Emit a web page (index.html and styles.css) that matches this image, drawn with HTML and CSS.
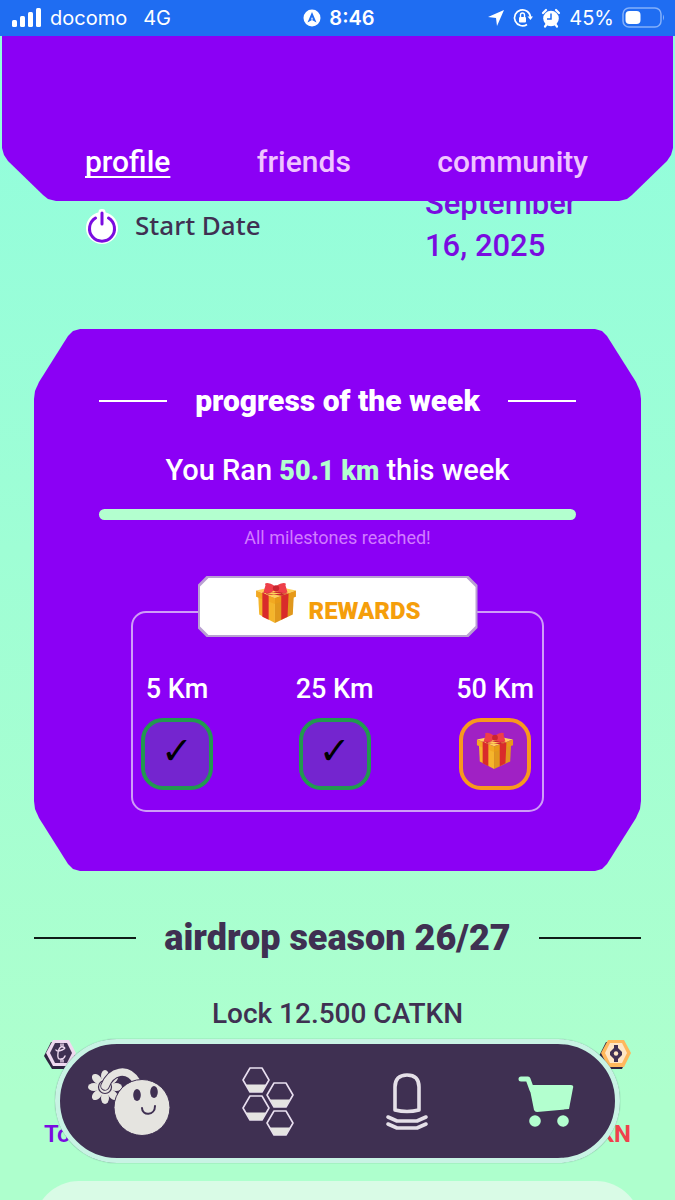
FILE: index.html
```html
<!DOCTYPE html>
<html lang="en">
<head>
<meta charset="utf-8">
<meta name="viewport" content="width=device-width, initial-scale=1">
<title>Profile</title>
<link rel="stylesheet" href="styles.css">
</head>
<body>
<svg class="defs" aria-hidden="true">
  <defs>
    <symbol id="gift" viewBox="0 0 40 40">
      <path fill="#f5b52b" d="M3 12 19 17V39L4 31Z"/>
      <path fill="#e0981c" d="M37 12 19 17V39L36 31Z"/>
      <path fill="#ffd25a" d="M1 8 20 4 39 8 19 15Z"/>
      <path fill="#f2a922" d="M1 8 19 15V21L1 14Z"/>
      <path fill="#e79a18" d="M39 8 19 15V21L39 14Z"/>
      <path fill="#d92b2b" d="M7 10 13 13V36L7 33ZM32 11 25 13V36L31 33Z"/>
      <path fill="#c9252f" d="M7 10 12 9 29 12 25 13ZM31 11 27 8 10 11 12 12Z"/>
      <path fill="#ee3f49" d="M19 4C14 0 8 0 10 3L8 10C13 11 17 10 19 7ZM20 4C25 0 31 0 29 3L31 10C26 11 22 10 20 7Z"/>
      <rect fill="#c9252f" x="17" y="3" width="6" height="6" rx="3"/>
    </symbol>
    <symbol id="cell" viewBox="0 0 28 26">
      <path fill="none" stroke="#e9dff0" stroke-width="1.6" stroke-linejoin="round" d="M8 1H20L27 13 20 25H8L1 13Z"/>
      <path fill="#e5e4e2" d="M4 17.500H24L20 25H8Z"/>
    </symbol>
  </defs>
</svg>

<div class="status">
  <div class="status-side">
    <svg width="30" height="20" viewBox="0 0 30 20" fill="#fff"><rect y="12" width="5" height="7" rx="1.500"/><rect x="8" y="8" width="5" height="11" rx="1.500"/><rect x="16" y="4" width="5" height="15" rx="1.500"/><rect x="24" width="5" height="19" rx="1.500"/></svg>
    <span class="carrier">docomo</span>
    <span>4G</span>
  </div>
  <div class="status-time">
    <svg width="18" height="18" viewBox="0 0 18 18"><circle cx="9" cy="9" r="8.500" fill="#fff"/><path fill="#1f6df2" d="M9 3 13.500 13.500 9 11 4.500 13.500Z"/><path fill="#fff" d="M9 8 10 10.500H8Z"/></svg>
    <span>8:46</span>
  </div>
  <div class="status-side status-end">
    <svg width="18" height="18" viewBox="0 0 18 18"><path fill="#fff" d="M17 1 10 17 9 9 1 8Z"/></svg>
    <svg width="20" height="20" viewBox="0 0 20 20"><path fill="none" stroke="#fff" stroke-width="1.700" d="M14 16.500A8 8 0 1 1 17.500 9"/><path fill="#fff" d="M14.500 8.500H20L17.500 12Z"/><rect x="6" y="9" width="7" height="5.500" rx="1" fill="#fff"/><path fill="none" stroke="#fff" stroke-width="1.400" d="M7.500 9V7a2 2 0 0 1 4 0V9"/></svg>
    <svg width="20" height="20" viewBox="0 0 20 20"><circle cx="10" cy="10.500" r="7.800" fill="#fff"/><path fill="none" stroke="#fff" stroke-width="2.200" stroke-linecap="round" d="M2 5 5 2M18 5 15 2M4 18.500 5.500 16.500M16 18.500 14.500 16.500"/><path fill="none" stroke="#1f6df2" stroke-width="1.500" d="M10 5.500V11H6"/></svg>
    <span>45%</span>
    <svg width="44" height="22" viewBox="0 0 44 22"><rect x="1" y="1" width="38" height="19" rx="6" fill="none" stroke="#84b0fa" stroke-width="1.500"/><rect x="3.500" y="4" width="15" height="13" rx="4" fill="#fff"/><path fill="#84b0fa" d="M41 7.500Q43 10.500 41 13.500Z"/></svg>
  </div>
</div>

<header class="header">
  <nav class="tabs">
    <a class="tab active" href="#profile">profile</a>
    <a class="tab" href="#friends">friends</a>
    <a class="tab" href="#community">community</a>
  </nav>
</header>

<main class="page">
  <section class="start">
    <div class="start-label">
      <svg width="34" height="36" viewBox="0 0 34 36"><circle cx="17" cy="21" r="16" fill="#fff"/><rect x="13.500" y="2" width="7" height="16" rx="3" fill="#fff"/><path fill="none" stroke="#7a0ce0" stroke-width="3" stroke-linecap="round" d="M10.500 11A12.500 12.500 0 1 0 23.500 11M17 6V17"/></svg>
      <span>Start Date</span>
    </div>
    <div class="start-date">September 16, 2025</div>
  </section>

  <section class="card">
    <h2 class="rule-title">progress of the week</h2>
    <p class="ran">You Ran <strong>50.1 km</strong> this week</p>
    <div class="bar"></div>
    <p class="note">All milestones reached!</p>
    <div class="badge"><div class="badge-face">
      <svg width="42" height="42"><use href="#gift"/></svg>
      <span>REWARDS</span>
    </div></div>
    <ul class="goals">
      <li class="goal"><span>5 Km</span><div class="tile">✓</div></li>
      <li class="goal"><span>25 Km</span><div class="tile">✓</div></li>
      <li class="goal"><span>50 Km</span><div class="tile open"><svg width="38" height="38"><use href="#gift"/></svg></div></li>
    </ul>
  </section>

  <section class="airdrop">
    <h2 class="rule-title large">airdrop season 26/27</h2>
    <p class="lock">Lock 12.500 CATKN</p>
    <div class="tokens">
      <div class="token">
        <svg width="32" height="29" viewBox="0 0 32 29"><path fill="#2d2440" d="M7 2H24L31 16 24 29H8L0 16Z"/><path fill="#eed9ef" d="M9 0H25L32 13 25 26H9L2 13Z"/><path fill="#3f3052" d="M11 3H23L28 13 23 23H11L6 13Z"/><path fill="none" stroke="#eed9ef" stroke-width="1.400" stroke-linecap="round" d="M12 10Q13 12 18 10T19 7Q15 6 14 13T17 19Q20 19 21 16M17 4V6M17 20V22M19 4V6M19 20V22"/></svg>
        <span>Total</span>
      </div>
      <div class="token token-end">
        <svg width="32" height="29" viewBox="0 0 32 29"><path fill="#2d2440" d="M7 2H24L29 16 23 29H8L0 16Z"/><path fill="#ffb85c" d="M9 0H25L32 13 25 27H9L2 13Z"/><path fill="#ffe6c4" d="M11 3H23L28 13 23 23H11L6 13Z"/><path fill="#3f3052" d="M15 5H19V8L23 12V15L19 19V22H15V19L11 15V12L15 8Z"/><circle cx="17" cy="13.500" r="2.200" fill="#ffe6c4"/></svg>
        <span>CATKN</span>
      </div>
    </div>
  </section>
  <section class="panel"></section>
</main>

<nav class="dock">
  <a href="#home" aria-label="Home"><svg width="84" height="70" viewBox="-1 -3 84 70">
    <g fill="#e5e4e0"><ellipse cx="17" cy="7" rx="4" ry="6"/><ellipse cx="17" cy="29" rx="4" ry="6"/><ellipse cx="6" cy="18" rx="6" ry="4"/><ellipse cx="28" cy="18" rx="6" ry="4"/><ellipse cx="9" cy="10" rx="4" ry="6" transform="rotate(-45 9 10)"/><ellipse cx="25" cy="10" rx="4" ry="6" transform="rotate(45 25 10)"/><ellipse cx="9" cy="26" rx="4" ry="6" transform="rotate(45 9 26)"/><ellipse cx="25" cy="26" rx="4" ry="6" transform="rotate(-45 25 26)"/><circle cx="17" cy="18" r="9"/></g>
    <circle cx="17" cy="18" r="6.500" fill="none" stroke="#3f3052" stroke-width="1.200"/>
    <path fill="none" stroke="#3f3052" stroke-width="9.500" stroke-linecap="round" d="M17 17C23 2 39-3 49 13"/>
    <path fill="none" stroke="#e5e4e0" stroke-width="7.500" stroke-linecap="round" d="M17 17C23 2 39-3 49 13"/>
    <circle cx="54" cy="38.500" r="28" fill="#e5e4e0" stroke="#3f3052"/>
    <ellipse cx="49" cy="26" rx="3.800" ry="6" fill="#3f3052"/><ellipse cx="66" cy="23" rx="3.800" ry="6" fill="#3f3052"/>
    <path fill="none" stroke="#3f3052" stroke-width="2" stroke-linecap="round" d="M54 39C54 47 67 47 67 37"/>
  </svg></a>
  <a href="#hive" aria-label="Hive"><svg width="52" height="70" viewBox="0 -1 52 70"><use href="#cell" width="28" height="26"/><use href="#cell" x="24" y="15" width="28" height="26"/><use href="#cell" y="28" width="28" height="26"/><use href="#cell" x="24" y="43" width="28" height="26"/></svg></a>
  <a href="#rank" aria-label="Rank"><svg width="42" height="58" viewBox="0 -1 42 58" fill="none" stroke="#e5e0e8" stroke-width="3.600" stroke-linecap="round" stroke-linejoin="round"><path d="M9 37V14Q9 2 21 2T33 14V37Q21 40 9 37Z"/><path d="M2 44 11 48H31L40 44M2 51 11 55H31L40 51"/></svg></a>
  <a href="#shop" aria-label="Shop"><svg width="56" height="52" viewBox="0 -1 56 52" fill="#b3ffcf"><path fill="none" stroke="#b3ffcf" stroke-width="5" stroke-linecap="round" stroke-linejoin="round" d="M3 3H10L14 14"/><path d="M11 9H53Q56 9 55 12L51 33 19 36Q17 36 16 34Z"/><circle cx="17" cy="45" r="5.800"/><circle cx="45" cy="45" r="5.800"/></svg></a>
</nav>
</body>
</html>
```

FILE: styles.css
```css
* { box-sizing: border-box; }

body {
  margin: 0;
  height: 100vh;
  overflow: hidden;
  background: linear-gradient(#90fddd, #aeffcd 1100px);
  font-family: Roboto, "Open Sans", sans-serif;
  font-weight: 500;
  color: #3f3052;
}

h2, p, ul { margin: 0; padding: 0; }
svg { display: block; flex: none; overflow: visible; }
.defs { position: absolute; width: 0; height: 0; }

/* Status bar */
.status {
  position: fixed;
  inset: 0 0 auto;
  z-index: 3;
  height: 36px;
  padding: 0 9px 0 12px;
  display: grid;
  grid-template-columns: 1fr auto 1fr;
  align-items: center;
  background: #1f6df2;
  color: #fff;
  font: 400 20px/36px Inter, sans-serif;
}
.status-side, .status-time { display: flex; align-items: center; gap: 8px; }
.status-time { font-weight: 600; }
.status-end { justify-content: flex-end; }
.carrier { margin-right: 8px; }

/* Header tabs */
.header {
  position: fixed;
  inset: 36px 2px auto;
  z-index: 2;
  height: 165px;
  padding: 0 85px 20px 83px;
  display: flex;
  flex-direction: column;
  justify-content: flex-end;
  background: #8b00f5;
  clip-path: polygon(0 0, 100% 0, 100% 112px, calc(100% - 2px) 119px, calc(100% - 6px) 125px, calc(100% - 41px) 159px, calc(100% - 46px) 163px, calc(100% - 54px) 100%, 54px 100%, 46px 163px, 41px 159px, 6px 125px, 2px 119px, 0 112px);
}
.tabs { display: flex; justify-content: space-between; }
.tab { color: #f0c4ff; font-size: 30px; line-height: 38px; text-decoration: none; }
.tab.active {
  color: #fff;
  text-decoration: underline;
  text-decoration-thickness: 2px;
  text-underline-offset: 4px;
  text-decoration-skip-ink: none;
}

/* Page */
.page { min-height: 100vh; padding: 183px 34px 0; display: flex; flex-direction: column; }
.start { display: grid; grid-template-columns: 1fr 165px; align-items: center; padding: 0 51px; }
.start-label { display: flex; align-items: center; gap: 16px; font: 500 26px/36px "Noto Sans", sans-serif; }
.start-date { color: #7a0ce0; font-size: 31px; line-height: 42px; }

.card {
  margin-top: 62px;
  padding: 52px 65px 59px;
  background: #8b00f5;
  color: #fff;
  text-align: center;
  clip-path: polygon(46px 0, calc(100% - 46px) 0, calc(100% - 39px) 2px, calc(100% - 34px) 7px, calc(100% - 5px) 53px, calc(100% - 1px) 62px, 100% 70px, 100% calc(100% - 70px), calc(100% - 1px) calc(100% - 62px), calc(100% - 5px) calc(100% - 53px), calc(100% - 34px) calc(100% - 7px), calc(100% - 39px) calc(100% - 2px), calc(100% - 46px) 100%, 46px 100%, 39px calc(100% - 2px), 34px calc(100% - 7px), 5px calc(100% - 53px), 1px calc(100% - 62px), 0 calc(100% - 70px), 0 70px, 1px 62px, 5px 53px, 34px 7px, 39px 2px);
}
.rule-title {
  display: flex;
  align-items: center;
  gap: 28px;
  font-size: 30px;
  font-weight: 900;
  line-height: 40px;
  white-space: nowrap;
}
.rule-title::before, .rule-title::after { content: ""; flex: 1; height: 2px; background: #fff; }
.ran { margin-top: 31px; font-size: 29px; line-height: 36px; }
.ran strong { color: #b3ffcf; font-size: 27px; font-weight: 900; }
.bar { height: 11px; margin-top: 20px; border-radius: 6px; background: #b3ffcf; }
.note { margin-top: 6px; color: #d17bff; font-size: 18px; font-weight: 400; line-height: 24px; }

.badge, .badge-face {
  clip-path: polygon(9px 0, calc(100% - 9px) 0, 100% 9px, 100% calc(100% - 9px), calc(100% - 9px) 100%, 9px 100%, 0 calc(100% - 9px), 0 9px);
}
.badge { position: relative; z-index: 1; width: 280px; margin: 26px auto -26px; padding: 2px; background: #b9a0d2; }
.badge-face {
  height: 57px;
  display: flex;
  align-items: center;
  justify-content: center;
  gap: 12px;
  background: #fff;
  color: #f59e0b;
  font-size: 24px;
  font-weight: 900;
}
.badge-face svg { margin-bottom: 8px; }
.badge-face span { padding-top: 8px; }

.goals {
  list-style: none;
  margin: 0 32px;
  padding: 60px 8px 20px;
  display: flex;
  justify-content: space-between;
  border: 2px solid #cf9cf7;
  border-radius: 15px;
}
.goal { display: flex; flex-direction: column; align-items: center; gap: 13px; font-size: 27px; line-height: 32px; }
.tile {
  width: 72px;
  height: 72px;
  padding-bottom: 6px;
  display: grid;
  place-items: center;
  border: 4px solid #22994f;
  border-radius: 22px;
  background: #7425cf;
  color: #000;
  font: 700 38px/40px "DejaVu Sans", sans-serif;
}
.tile.open { border-color: #f8981d; background: #a021c4; }

.airdrop { margin-top: 43px; text-align: center; }
.rule-title.large { font-size: 36px; line-height: 48px; }
.rule-title.large::before, .rule-title.large::after { background: #101c18; }
.lock { margin-top: 34px; font-size: 28px; line-height: 36px; }
.tokens { display: flex; justify-content: space-between; margin-top: 8px; padding: 0 10px; font-size: 24px; line-height: 28px; }
.token { display: flex; flex-direction: column; align-items: flex-start; gap: 51px; color: #7a0ce0; font-weight: 600; }
.token-end { align-items: flex-end; color: #f0414c; font-weight: 700; }
.panel { flex: 1; min-height: 60px; margin-top: 33px; border-radius: 45px 45px 0 0; background: #d9fbe6; }

/* Bottom dock */
.dock {
  position: fixed;
  inset: auto 55px 37px;
  z-index: 2;
  height: 124px;
  display: grid;
  grid-template-columns: repeat(4, 1fr);
  place-items: center;
  border: 5px solid #c8f3e4;
  border-radius: 62px;
  background: #3f3052;
  box-shadow: 0 0 1px #4b7767;
}
```
